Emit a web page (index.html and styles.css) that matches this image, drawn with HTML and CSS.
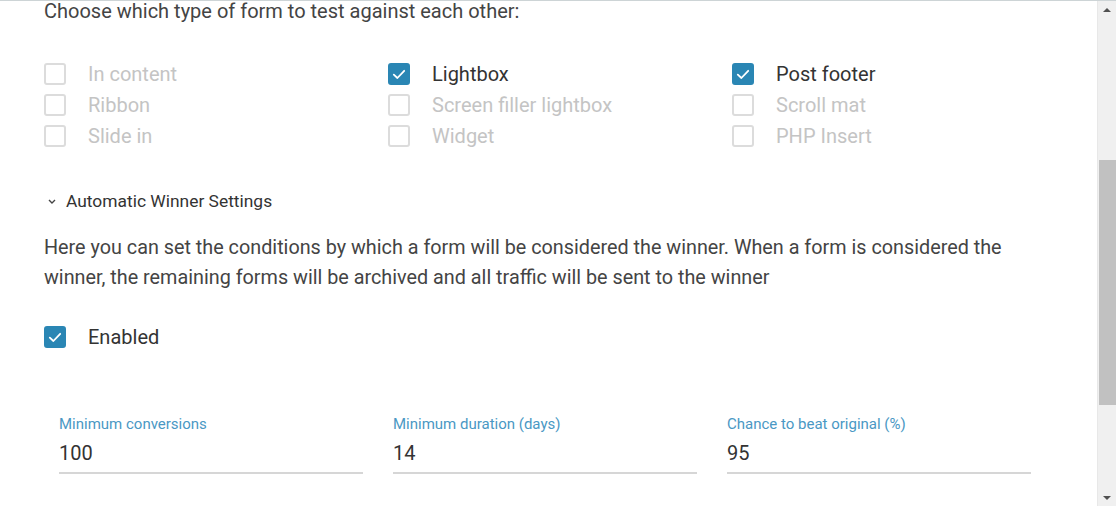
FILE: index.html
```html
<!DOCTYPE html>
<html>
<head>
    <meta charset="UTF-8">
    <title>Split test settings</title>
    <link rel="stylesheet" href="styles.css">
</head>
<body>
    <div class="page">
        <div class="content">
            <p class="intro">Choose which type of form to test against each other:</p>

            <div class="type-grid">
                <label class="check disabled"><span class="box"></span>In content</label>
                <label class="check"><span class="box checked"><svg viewBox="0 0 22 22"><polyline points="5.8,11.6 9.4,15 16.2,7.8"/></svg></span>Lightbox</label>
                <label class="check"><span class="box checked"><svg viewBox="0 0 22 22"><polyline points="5.8,11.6 9.4,15 16.2,7.8"/></svg></span>Post footer</label>
                <label class="check disabled"><span class="box"></span>Ribbon</label>
                <label class="check disabled"><span class="box"></span>Screen filler lightbox</label>
                <label class="check disabled"><span class="box"></span>Scroll mat</label>
                <label class="check disabled"><span class="box"></span>Slide in</label>
                <label class="check disabled"><span class="box"></span>Widget</label>
                <label class="check disabled"><span class="box"></span>PHP Insert</label>
            </div>

            <div class="toggle">
                <svg class="chevron" viewBox="0 0 8 5"><polyline points="1,1 4,4 7,1"/></svg>
                Automatic Winner Settings
            </div>

            <p class="desc">Here you can set the conditions by which a form will be considered the winner. When a form is considered the winner, the remaining forms will be archived and all traffic will be sent to the winner</p>

            <label class="check enabled"><span class="box checked"><svg viewBox="0 0 22 22"><polyline points="5.8,11.6 9.4,15 16.2,7.8"/></svg></span>Enabled</label>

            <div class="fields">
                <div class="field">
                    <div class="field-label">Minimum conversions</div>
                    <div class="field-value">100</div>
                </div>
                <div class="field">
                    <div class="field-label">Minimum duration (days)</div>
                    <div class="field-value">14</div>
                </div>
                <div class="field">
                    <div class="field-label">Chance to beat original (%)</div>
                    <div class="field-value">95</div>
                </div>
            </div>
        </div>

        <div class="scrollbar">
            <div class="arrow up"></div>
            <div class="track">
                <div class="thumb"></div>
            </div>
            <div class="arrow down"></div>
        </div>
    </div>
</body>
</html>
```

FILE: styles.css
```css
html, body {
    margin: 0;
    height: 100%;
    overflow: hidden;
    background: #fff;
}
body {
    font-family: Roboto, "Liberation Sans", sans-serif;
    color: #444;
}
.page {
    display: flex;
    height: 506px;
    border-top: 1px solid #cdd4d6;
    box-sizing: border-box;
}
.content {
    flex: 1;
    padding: 0 0 0 44px;
}
.intro {
    margin: 0;
    font-size: 20px;
    line-height: 20px;
    color: #444;
}
.type-grid {
    display: grid;
    grid-template-columns: 344px 344px 344px;
    grid-auto-rows: 31px;
    margin-top: 37px;
}
.check {
    display: flex;
    align-items: center;
    font-size: 20px;
    color: #333;
}
.check.disabled {
    color: #c4c4c4;
}
.box {
    width: 22px;
    height: 22px;
    box-sizing: border-box;
    border: 2px solid #dcdcdc;
    border-radius: 3px;
    margin-right: 22px;
    flex: none;
}
.box.checked {
    background: #2a86b4;
    border-color: #2a86b4;
}
.box svg {
    display: block;
    width: 22px;
    height: 22px;
    margin: -2px;
}
.box polyline {
    fill: none;
    stroke: #fff;
    stroke-width: 1.8;
    stroke-linecap: round;
    stroke-linejoin: round;
}
.toggle {
    display: flex;
    align-items: center;
    margin-top: 39px;
    font-size: 17.4px;
    line-height: 22px;
    color: #333;
}
.chevron {
    width: 8px;
    height: 5px;
    margin: 0 10px 0 4px;
}
.chevron polyline {
    fill: none;
    stroke: #444;
    stroke-width: 1.4;
}
.desc {
    margin: 21px 0 0;
    max-width: 1000px;
    font-size: 19.8px;
    line-height: 30px;
    color: #444;
}
.check.enabled {
    margin-top: 33px;
    height: 22px;
}
.fields {
    display: grid;
    grid-template-columns: 304px 304px 304px;
    column-gap: 30px;
    margin: 67px 0 0 15px;
}
.field {
    border-bottom: 2px solid #d6d6d6;
}
.field-label {
    font-size: 15px;
    line-height: 18px;
    color: #4a98c4;
}
.field-value {
    font-size: 20px;
    line-height: 24px;
    padding: 8px 0 7px;
    color: #333;
}
.scrollbar {
    width: 19px;
    display: flex;
    flex-direction: column;
    background: #f0f0f0;
    border-left: 1px solid #e8e8e8;
    box-sizing: border-box;
}
.arrow {
    height: 17px;
    display: flex;
    align-items: center;
    justify-content: center;
}
.arrow::before {
    content: "";
    border-left: 4px solid transparent;
    border-right: 4px solid transparent;
}
.arrow.up::before {
    border-bottom: 4px solid #505050;
}
.arrow.down::before {
    border-top: 4px solid #505050;
}
.track {
    flex: 1;
    padding-top: 142px;
}
.thumb {
    height: 245px;
    margin-left: 1px;
    background: #c1c1c1;
}
```
